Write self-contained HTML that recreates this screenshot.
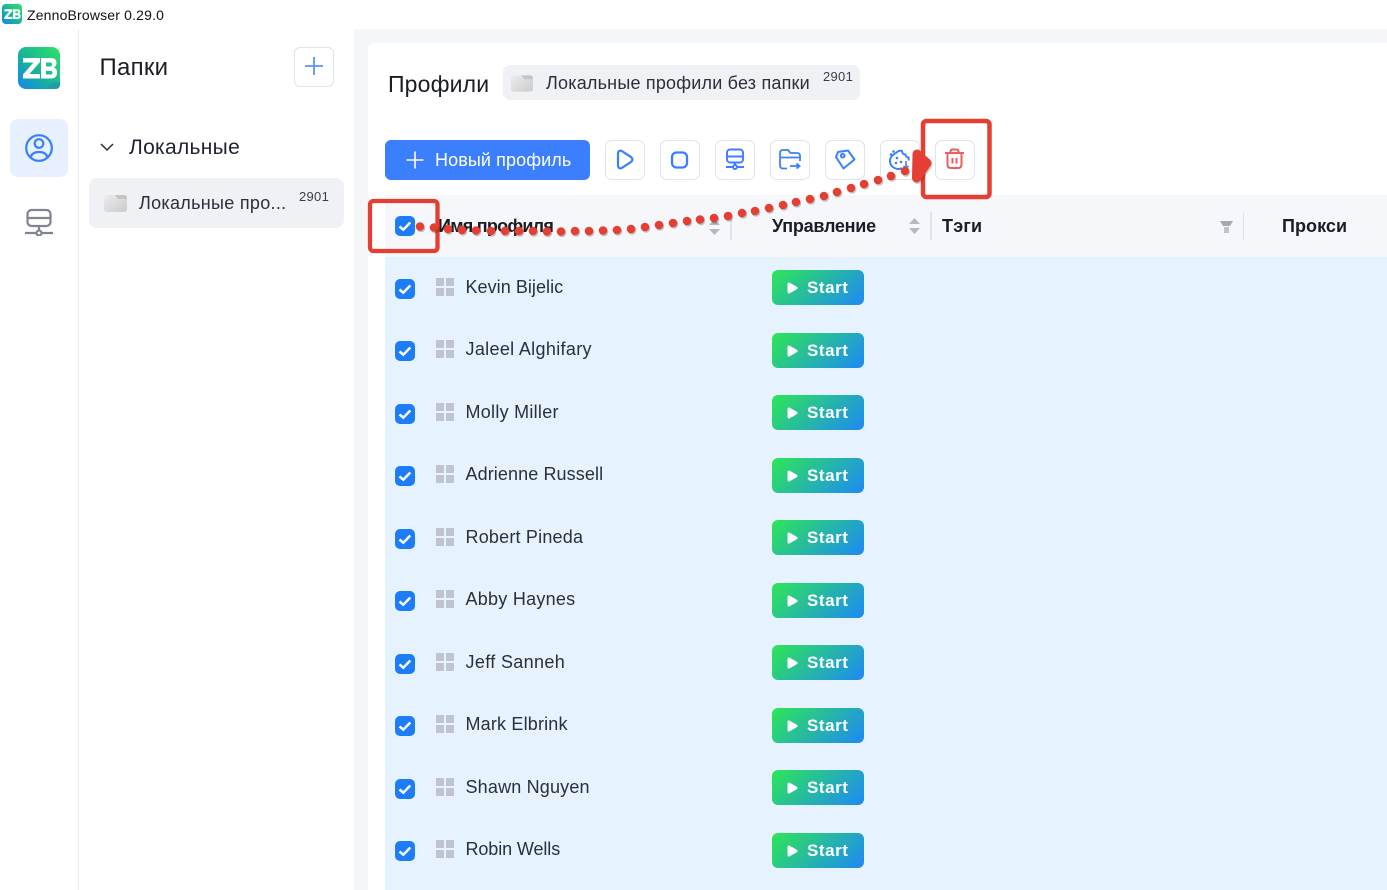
<!DOCTYPE html>
<html lang="ru"><head><meta charset="utf-8"><title>ZennoBrowser</title>
<style>
html,body{margin:0;padding:0;background:#fff}
body{width:1387px;height:890px;position:relative;overflow:hidden;font-family:"Liberation Sans",sans-serif;color:#1f2330}
.a{position:absolute}
.t{position:absolute;white-space:nowrap;line-height:24px}
.ib{position:absolute;top:140px;width:38px;height:38px;border:1px solid #dfe3ee;border-radius:7px;background:#fff}
.ib svg{position:absolute;left:7px;top:7px}
.r{position:absolute;left:385px;height:0;width:1000px}
.cb{position:absolute;left:10px;top:8.75px;width:20px;height:20px;border-radius:5px;background:#1d7cf8}
.cb svg{position:absolute;left:0;top:0}
.g{position:absolute;left:51px;top:7.75px;width:18px;height:18px}
.g i{position:absolute;width:8px;height:8px;background:#c0c4d0}
.n{position:absolute;left:80.5px;top:4.75px;line-height:24px;font-size:18px;white-space:nowrap;color:#2b2f3a}
.s{position:absolute;left:387px;top:0;width:92px;height:35px;border-radius:6px;background:linear-gradient(135deg,#2ee655,#1e88f6)}
.s svg{position:absolute;left:15px;top:11px}
.s b{position:absolute;left:35px;top:6px;line-height:24px;font-size:17px;font-weight:700;color:#fff;letter-spacing:.55px}
</style></head><body>

<!-- title bar -->
<svg class="a" style="left:2px;top:4px" width="20" height="20" viewBox="0 0 42 42"><defs><linearGradient id="lg0" x1="1" y1="0" x2="0" y2="1"><stop offset="0" stop-color="#2fe465"/><stop offset=".55" stop-color="#18b49a"/><stop offset="1" stop-color="#1484ee"/></linearGradient></defs><rect width="42" height="42" rx="8" fill="url(#lg0)"/><path d="M5 11h17v4L11.500 27H22v4.500H5v-4L15.500 15.500H5z" fill="#fff"/><path fill-rule="evenodd" d="M23 11h10q5.500 0 5.500 5 0 3-2.500 4.500 3 1 3 5 0 6-6 6H23zM28 15.500v4h4.500q1.500 0 1.500-2t-1.500-2zM28 24v3.500h5q1.500 0 1.500-1.750T33 24z" fill="#fff"/></svg>
<div class="t" style="left:27px;top:3px;font-size:14px;color:#111;letter-spacing:.17px">ZennoBrowser 0.29.0</div>

<!-- backgrounds -->
<div class="a" style="left:78px;top:29px;width:1px;height:861px;background:#e8eaee"></div>
<div class="a" style="left:354px;top:29px;width:1033px;height:861px;background:#f5f6f8"></div>
<div class="a" style="left:368px;top:43px;width:1019px;height:847px;background:#fff;border-top-left-radius:6px"></div>

<!-- rail -->
<svg class="a" style="left:18px;top:47px" width="42" height="42" viewBox="0 0 42 42"><defs><linearGradient id="lg1" x1="1" y1="0" x2="0" y2="1"><stop offset="0" stop-color="#2fe465"/><stop offset=".55" stop-color="#18b49a"/><stop offset="1" stop-color="#1484ee"/></linearGradient></defs><rect width="42" height="42" rx="8" fill="url(#lg1)"/><path d="M30 42c-1-4 4-7 12-7v3a4 4 0 0 1-4 4z" fill="#1e9fa8"/><path d="M5 11h17v4L11.500 27H22v4.500H5v-4L15.500 15.500H5z" fill="#fff"/><path fill-rule="evenodd" d="M23 11h10q5.500 0 5.500 5 0 3-2.500 4.500 3 1 3 5 0 6-6 6H23zM28 15.500v4h4.500q1.500 0 1.500-2t-1.500-2zM28 24v3.500h5q1.500 0 1.500-1.750T33 24z" fill="#fff"/></svg>
<div class="a" style="left:10px;top:119px;width:58px;height:58px;border-radius:8px;background:#e6f0ff"></div>
<svg class="a" style="left:24px;top:133px" width="30" height="30" viewBox="0 0 30 30" fill="none" stroke="#3b7fff" stroke-width="2.200"><circle cx="15" cy="15" r="12.800"/><circle cx="15" cy="10.500" r="4.300"/><path d="M6.500 24.500c1-4 4.500-5.500 8.500-5.500s7.500 1.500 8.500 5.500"/></svg>
<svg class="a" style="left:25px;top:208px" width="28" height="28" viewBox="0 0 28 28" fill="none" stroke="#7f8590" stroke-width="2.200"><rect x="2.500" y="2" width="23" height="16" rx="4"/><path d="M2.500 10h23M14 18v4.500M0 25h11M17 25h11"/><circle cx="14" cy="25" r="2.500"/></svg>

<!-- folders panel -->
<div class="t" style="left:99.500px;top:56px;font-size:24px;letter-spacing:.25px;color:#1a1d26">Папки</div>
<div class="a" style="left:294px;top:47px;width:38px;height:38px;border:1px solid #dfe3ee;border-radius:6px"></div>
<svg class="a" style="left:304px;top:56px" width="20" height="20" viewBox="0 0 20 20" stroke="#5b93f5" stroke-width="1.800"><path d="M10 1v18M1 10h18"/></svg>
<svg class="a" style="left:100px;top:142px" width="14" height="11" viewBox="0 0 14 11" fill="none" stroke="#2b2f3a" stroke-width="1.500"><path d="M1 2l6 6 6-6"/></svg>
<div class="t" style="left:129px;top:136px;font-size:21px;letter-spacing:.3px;color:#1f2330">Локальные</div>
<div class="a" style="left:89px;top:178px;width:255px;height:50px;border-radius:8px;background:#eff1f5"></div>
<svg class="a" style="left:104px;top:195px" width="23" height="17" viewBox="0 0 23 17"><defs><linearGradient id="f1" x1="0" y1="0" x2="1" y2="1"><stop offset="0" stop-color="#ececec"/><stop offset="1" stop-color="#cbcbcb"/></linearGradient></defs><rect width="23" height="17" rx="3" fill="url(#f1)"/><path d="M11 0h9q3 0 3 3v1H14z" fill="#c4c4c4"/></svg>
<div class="t" style="left:139px;top:191px;font-size:18px;letter-spacing:.3px;color:#2b2f3a">Локальные про...</div>
<div class="t" style="left:299px;top:185px;font-size:13px;letter-spacing:.3px;color:#3a3e48">2901</div>

<!-- main header -->
<div class="t" style="left:388px;top:72px;font-size:23px;letter-spacing:.15px;color:#1a1d26">Профили</div>
<div class="a" style="left:503px;top:65px;width:357px;height:35px;border-radius:7px;background:#eff1f5"></div>
<svg class="a" style="left:511px;top:75px" width="22" height="17" viewBox="0 0 23 17"><rect width="23" height="17" rx="3" fill="url(#f1)"/><path d="M11 0h9q3 0 3 3v1H14z" fill="#c4c4c4"/></svg>
<div class="t" style="left:546px;top:71px;font-size:18px;letter-spacing:.2px;color:#2b2f3a">Локальные профили без папки</div>
<div class="t" style="left:823px;top:65px;font-size:13px;letter-spacing:.3px;color:#3a3e48">2901</div>

<!-- toolbar -->
<div class="a" style="left:385px;top:140px;width:205px;height:40px;border-radius:6px;background:#3b7fff"></div>
<svg class="a" style="left:405px;top:150px" width="20" height="20" viewBox="0 0 20 20" stroke="#fff" stroke-width="1.600"><path d="M10 1.500v17M1.500 10h17"/></svg>
<div class="t" style="left:435px;top:148px;font-size:18px;letter-spacing:.1px;color:#fff">Новый профиль</div>

<div class="ib" style="left:605px"><svg width="24" height="24" viewBox="0 0 24 24" fill="none" stroke="#3b7fff" stroke-width="2.200"><path d="M5 5.500c0-2.500 2-3.500 4-2.300l8.500 5.500c2.500 1.700 2.500 4 0 5.600L9 19.800c-2 1.200-4 .2-4-2.300z"/></svg></div>
<div class="ib" style="left:660px"><svg width="24" height="24" viewBox="0 0 24 24" fill="none" stroke="#3b7fff" stroke-width="2.300"><rect x="4" y="4.500" width="15" height="15" rx="4.500"/></svg></div>
<div class="ib" style="left:715px"><svg width="24" height="24" viewBox="0 0 24 24" fill="none" stroke="#3b7fff" stroke-width="1.900"><rect x="4" y="1.500" width="16" height="13" rx="3"/><path d="M4 8.500h16M12 14.500v2.500M3 19h6.500M14.500 19H21"/><circle cx="12" cy="19" r="2"/></svg></div>
<div class="ib" style="left:770px"><svg width="24" height="24" viewBox="0 0 24 24" fill="none" stroke="#3b7fff" stroke-width="1.800"><path d="M9 20.500H5q-3 0-3-3V5q0-3 3-3h5l2.500 3H19q3 0 3 3v5M3 9.500h18M12 18h9M18.500 15.500l3 2.500-3 2.500"/></svg></div>
<div class="ib" style="left:825px"><svg width="24" height="24" viewBox="0 0 24 24" fill="none" stroke="#3b7fff" stroke-width="2" stroke-linejoin="round"><path d="M3 9L5 4 15 2.500 21.500 11.500 10.500 20.500z"/><circle cx="9.700" cy="7.700" r="1.800"/></svg></div>
<div class="ib" style="left:880px"><svg width="24" height="24" viewBox="0 0 24 24" fill="none" stroke="#3b7fff" stroke-width="2"><path d="M8 5c-3 1.500-6 4-6 8 0 4.500 4 8 8.500 8 1.500 0 2.500-.3 3.500-.8M8 5c2-2 4-3 6-2 0 2 1.500 3.500 3.500 3.500 0 2 1.500 3 3 3 .2 1 .3 2 .2 3"/><path d="M18 13v7M15.500 18l2.500 2.500 2.500-2.500" stroke-width="1.600"/><circle cx="9" cy="10" r="1.300" fill="#3b7fff" stroke="none"/><circle cx="8" cy="15" r="1.300" fill="#3b7fff" stroke="none"/><circle cx="13" cy="14" r="1.300" fill="#3b7fff" stroke="none"/><circle cx="5.500" cy="3.500" r="1.300" fill="#3b7fff" stroke="none"/><circle cx="3" cy="6.500" r="1.300" fill="#3b7fff" stroke="none"/></svg></div>
<div class="ib" style="left:935px"><svg width="24" height="24" viewBox="0 0 24 24" fill="none" stroke="#ef5e5a" stroke-width="2"><path d="M2 5h19M7.500 5V3.500q0-2 2-2h4q2 0 2 2V5M4.500 5v11.500q0 3.500 3.500 3.500h7q3.500 0 3.500-3.500V5M9.500 10v5.500M13.500 10v5.500"/></svg></div>

<!-- table head -->
<div class="a" style="left:385px;top:195px;width:1002px;height:62px;background:#f5f7fa"></div>
<div class="t" style="left:438px;top:214px;font-size:18px;font-weight:700;letter-spacing:-.75px;color:#1a1d26">Имя профиля</div>
<svg class="a" style="left:708px;top:218px" width="13" height="19" viewBox="0 0 13 19" fill="#b4b8c0"><path d="M1 7l5.500-6L12 7zM1 11h11l-5.500 6z"/></svg>
<div class="a" style="left:730px;top:212px;width:2px;height:28px;background:#dfe3e8"></div>
<div class="t" style="left:772px;top:214px;font-size:18px;font-weight:700;letter-spacing:-.25px;color:#1a1d26">Управление</div>
<svg class="a" style="left:908px;top:217px" width="13" height="19" viewBox="0 0 13 19" fill="#b4b8c0"><path d="M1 7l5.500-6L12 7zM1 11h11l-5.500 6z"/></svg>
<div class="a" style="left:930px;top:212px;width:2px;height:28px;background:#dfe3e8"></div>
<div class="t" style="left:942px;top:214px;font-size:18px;font-weight:700;letter-spacing:.2px;color:#1a1d26">Тэги</div>
<svg class="a" style="left:1219px;top:220px" width="15" height="14" viewBox="0 0 15 14"><path d="M1 1h13l-3 5H4z" fill="#a6aab0"/><path d="M5 7h5v6H5z" fill="#c0c3c8"/></svg>
<div class="a" style="left:1243px;top:212px;width:1px;height:28px;background:#dfe3e8"></div>
<div class="t" style="left:1282px;top:214px;font-size:18px;font-weight:700;letter-spacing:.05px;color:#1a1d26">Прокси</div>

<!-- rows bg -->
<div class="a" style="left:385px;top:257px;width:1002px;height:633px;background:#e6f3fe"></div>

<div class="r" style="top:270px"><div class="cb"><svg width="20" height="20" fill="none" stroke="#fff" stroke-width="2.500"><path d="M4.500 10.500l3.800 3.200 7-7.200"/></svg></div><div class="g"><i style="left:0;top:0"></i><i style="left:10px;top:0"></i><i style="left:0;top:10px"></i><i style="left:10px;top:10px"></i></div><div class="n" style="letter-spacing:.05px">Kevin Bijelic</div><div class="s"><svg width="14" height="14"><path d="M2 3L9 7 2 11z" fill="#fff" stroke="#fff" stroke-width="3" stroke-linejoin="round"/></svg><b>Start</b></div></div>
<div class="r" style="top:332.5px"><div class="cb"><svg width="20" height="20" fill="none" stroke="#fff" stroke-width="2.500"><path d="M4.500 10.500l3.800 3.200 7-7.200"/></svg></div><div class="g"><i style="left:0;top:0"></i><i style="left:10px;top:0"></i><i style="left:0;top:10px"></i><i style="left:10px;top:10px"></i></div><div class="n" style="letter-spacing:.33px">Jaleel Alghifary</div><div class="s"><svg width="14" height="14"><path d="M2 3L9 7 2 11z" fill="#fff" stroke="#fff" stroke-width="3" stroke-linejoin="round"/></svg><b>Start</b></div></div>
<div class="r" style="top:395px"><div class="cb"><svg width="20" height="20" fill="none" stroke="#fff" stroke-width="2.500"><path d="M4.500 10.500l3.800 3.200 7-7.200"/></svg></div><div class="g"><i style="left:0;top:0"></i><i style="left:10px;top:0"></i><i style="left:0;top:10px"></i><i style="left:10px;top:10px"></i></div><div class="n" style="letter-spacing:.27px">Molly Miller</div><div class="s"><svg width="14" height="14"><path d="M2 3L9 7 2 11z" fill="#fff" stroke="#fff" stroke-width="3" stroke-linejoin="round"/></svg><b>Start</b></div></div>
<div class="r" style="top:457.5px"><div class="cb"><svg width="20" height="20" fill="none" stroke="#fff" stroke-width="2.500"><path d="M4.500 10.500l3.800 3.200 7-7.200"/></svg></div><div class="g"><i style="left:0;top:0"></i><i style="left:10px;top:0"></i><i style="left:0;top:10px"></i><i style="left:10px;top:10px"></i></div><div class="n" style="letter-spacing:.1px">Adrienne Russell</div><div class="s"><svg width="14" height="14"><path d="M2 3L9 7 2 11z" fill="#fff" stroke="#fff" stroke-width="3" stroke-linejoin="round"/></svg><b>Start</b></div></div>
<div class="r" style="top:520px"><div class="cb"><svg width="20" height="20" fill="none" stroke="#fff" stroke-width="2.500"><path d="M4.500 10.500l3.800 3.200 7-7.200"/></svg></div><div class="g"><i style="left:0;top:0"></i><i style="left:10px;top:0"></i><i style="left:0;top:10px"></i><i style="left:10px;top:10px"></i></div><div class="n" style="letter-spacing:.2px">Robert Pineda</div><div class="s"><svg width="14" height="14"><path d="M2 3L9 7 2 11z" fill="#fff" stroke="#fff" stroke-width="3" stroke-linejoin="round"/></svg><b>Start</b></div></div>
<div class="r" style="top:582.5px"><div class="cb"><svg width="20" height="20" fill="none" stroke="#fff" stroke-width="2.500"><path d="M4.500 10.500l3.800 3.200 7-7.200"/></svg></div><div class="g"><i style="left:0;top:0"></i><i style="left:10px;top:0"></i><i style="left:0;top:10px"></i><i style="left:10px;top:10px"></i></div><div class="n" style="letter-spacing:.26px">Abby Haynes</div><div class="s"><svg width="14" height="14"><path d="M2 3L9 7 2 11z" fill="#fff" stroke="#fff" stroke-width="3" stroke-linejoin="round"/></svg><b>Start</b></div></div>
<div class="r" style="top:645px"><div class="cb"><svg width="20" height="20" fill="none" stroke="#fff" stroke-width="2.500"><path d="M4.500 10.500l3.800 3.200 7-7.200"/></svg></div><div class="g"><i style="left:0;top:0"></i><i style="left:10px;top:0"></i><i style="left:0;top:10px"></i><i style="left:10px;top:10px"></i></div><div class="n" style="letter-spacing:.35px">Jeff Sanneh</div><div class="s"><svg width="14" height="14"><path d="M2 3L9 7 2 11z" fill="#fff" stroke="#fff" stroke-width="3" stroke-linejoin="round"/></svg><b>Start</b></div></div>
<div class="r" style="top:707.5px"><div class="cb"><svg width="20" height="20" fill="none" stroke="#fff" stroke-width="2.500"><path d="M4.500 10.500l3.800 3.200 7-7.200"/></svg></div><div class="g"><i style="left:0;top:0"></i><i style="left:10px;top:0"></i><i style="left:0;top:10px"></i><i style="left:10px;top:10px"></i></div><div class="n" style="letter-spacing:.18px">Mark Elbrink</div><div class="s"><svg width="14" height="14"><path d="M2 3L9 7 2 11z" fill="#fff" stroke="#fff" stroke-width="3" stroke-linejoin="round"/></svg><b>Start</b></div></div>
<div class="r" style="top:770px"><div class="cb"><svg width="20" height="20" fill="none" stroke="#fff" stroke-width="2.500"><path d="M4.500 10.500l3.800 3.200 7-7.200"/></svg></div><div class="g"><i style="left:0;top:0"></i><i style="left:10px;top:0"></i><i style="left:0;top:10px"></i><i style="left:10px;top:10px"></i></div><div class="n" style="letter-spacing:.18px">Shawn Nguyen</div><div class="s"><svg width="14" height="14"><path d="M2 3L9 7 2 11z" fill="#fff" stroke="#fff" stroke-width="3" stroke-linejoin="round"/></svg><b>Start</b></div></div>
<div class="r" style="top:832.5px"><div class="cb"><svg width="20" height="20" fill="none" stroke="#fff" stroke-width="2.500"><path d="M4.500 10.500l3.800 3.200 7-7.200"/></svg></div><div class="g"><i style="left:0;top:0"></i><i style="left:10px;top:0"></i><i style="left:0;top:10px"></i><i style="left:10px;top:10px"></i></div><div class="n" style="letter-spacing:-.1px">Robin Wells</div><div class="s"><svg width="14" height="14"><path d="M2 3L9 7 2 11z" fill="#fff" stroke="#fff" stroke-width="3" stroke-linejoin="round"/></svg><b>Start</b></div></div>

<!-- header checkbox -->
<div class="a" style="left:395px;top:216px;width:20px;height:20px;border-radius:5px;background:#1d7cf8"><svg width="20" height="20" fill="none" stroke="#fff" stroke-width="2.500" style="position:absolute;left:0;top:0"><path d="M4.500 10.500l3.800 3.200 7-7.200"/></svg></div>

<!-- annotation overlay -->
<svg class="a" style="left:0;top:0" width="1387" height="890" viewBox="0 0 1387 890">
<rect x="370" y="201" width="67.500" height="50" rx="3.500" fill="none" stroke="#e53e32" stroke-width="4.300"/>
<rect x="923" y="121" width="66.500" height="76" rx="3.500" fill="none" stroke="#e53e32" stroke-width="4.500"/>
<g fill="#000" fill-opacity=".22" transform="translate(1 1.500)">
<circle cx="420" cy="226.500" r="4.300"/><circle cx="434" cy="227.500" r="4.300"/><circle cx="448" cy="229" r="4.300"/><circle cx="462" cy="230" r="4.300"/><circle cx="476" cy="230.500" r="4.300"/><circle cx="491" cy="231" r="4.300"/><circle cx="505" cy="231" r="4.300"/><circle cx="519" cy="231" r="4.300"/><circle cx="533" cy="231" r="4.300"/><circle cx="547" cy="231.500" r="4.300"/><circle cx="561" cy="231.500" r="4.300"/><circle cx="575" cy="231" r="4.300"/><circle cx="589" cy="231" r="4.300"/><circle cx="603" cy="230.500" r="4.300"/><circle cx="617" cy="230" r="4.300"/><circle cx="631" cy="229" r="4.300"/><circle cx="645" cy="227" r="4.300"/><circle cx="659" cy="225" r="4.300"/><circle cx="673" cy="223" r="4.300"/><circle cx="687" cy="221" r="4.300"/><circle cx="700" cy="219.500" r="4.300"/><circle cx="714" cy="218" r="4.300"/><circle cx="728" cy="216" r="4.300"/><circle cx="742" cy="213" r="4.300"/><circle cx="755" cy="211" r="4.300"/><circle cx="769" cy="208" r="4.300"/><circle cx="783" cy="205" r="4.300"/><circle cx="796" cy="202" r="4.300"/><circle cx="810" cy="199" r="4.300"/><circle cx="824" cy="196" r="4.300"/><circle cx="837" cy="192" r="4.300"/><circle cx="851" cy="188" r="4.300"/><circle cx="864" cy="184" r="4.300"/><circle cx="878" cy="180" r="4.300"/><circle cx="891" cy="176" r="4.300"/><circle cx="905" cy="171" r="4.300"/>
</g>
<g fill="#e53e32">
<circle cx="420" cy="226.500" r="4.300"/><circle cx="434" cy="227.500" r="4.300"/><circle cx="448" cy="229" r="4.300"/><circle cx="462" cy="230" r="4.300"/><circle cx="476" cy="230.500" r="4.300"/><circle cx="491" cy="231" r="4.300"/><circle cx="505" cy="231" r="4.300"/><circle cx="519" cy="231" r="4.300"/><circle cx="533" cy="231" r="4.300"/><circle cx="547" cy="231.500" r="4.300"/><circle cx="561" cy="231.500" r="4.300"/><circle cx="575" cy="231" r="4.300"/><circle cx="589" cy="231" r="4.300"/><circle cx="603" cy="230.500" r="4.300"/><circle cx="617" cy="230" r="4.300"/><circle cx="631" cy="229" r="4.300"/><circle cx="645" cy="227" r="4.300"/><circle cx="659" cy="225" r="4.300"/><circle cx="673" cy="223" r="4.300"/><circle cx="687" cy="221" r="4.300"/><circle cx="700" cy="219.500" r="4.300"/><circle cx="714" cy="218" r="4.300"/><circle cx="728" cy="216" r="4.300"/><circle cx="742" cy="213" r="4.300"/><circle cx="755" cy="211" r="4.300"/><circle cx="769" cy="208" r="4.300"/><circle cx="783" cy="205" r="4.300"/><circle cx="796" cy="202" r="4.300"/><circle cx="810" cy="199" r="4.300"/><circle cx="824" cy="196" r="4.300"/><circle cx="837" cy="192" r="4.300"/><circle cx="851" cy="188" r="4.300"/><circle cx="864" cy="184" r="4.300"/><circle cx="878" cy="180" r="4.300"/><circle cx="891" cy="176" r="4.300"/><circle cx="905" cy="171" r="4.300"/>
</g>
<path d="M917 154l10 9-10.500 15z" fill="#000" fill-opacity=".2" stroke="#000" stroke-opacity=".2" stroke-width="9" stroke-linecap="round" stroke-linejoin="round" transform="translate(1 1.500)"/>
<path d="M917 154l10 9-10.500 15z" fill="#e53e32" stroke="#e53e32" stroke-width="9" stroke-linecap="round" stroke-linejoin="round"/>
</svg>
</body></html>
